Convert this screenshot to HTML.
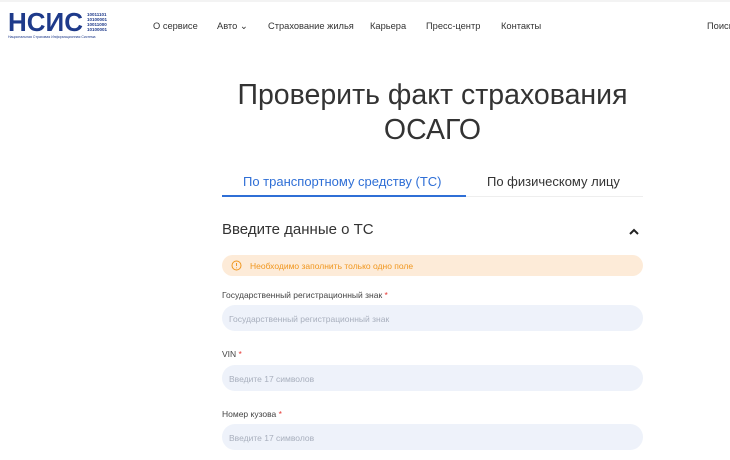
<!DOCTYPE html>
<html><head><meta charset="utf-8"><style>
*{margin:0;padding:0;box-sizing:border-box}
body{width:730px;height:460px;overflow:hidden;background:#fff;font-family:"Liberation Sans",sans-serif;position:relative;color:#333}
.a{position:absolute;white-space:nowrap}
.nav{font-size:9.3px;color:#333;top:21px}
.lab{font-size:8.5px;color:#444;left:222px}
.lab span{color:#e53935}
.inp{position:absolute;left:222px;width:421px;height:26px;background:#eef2fa;border-radius:13px;font-size:8.5px;color:#a8afbd;padding:9px 0 0 7px}
</style></head><body>
<div style="position:absolute;left:0;top:0;width:730px;height:2px;background:#f3f3f3"></div>
<div class="a" style="left:8px;top:8px;font-size:26px;font-weight:bold;color:#1e3a8a;letter-spacing:0px;line-height:28px">НСИС</div>
<div class="a" style="left:87px;top:12px;font-size:4.5px;line-height:5px;color:#1e3a8a;font-weight:bold">10011101<br>10100001<br>10011000<br>10100001</div>
<div class="a" style="left:8px;top:35px;font-size:3.5px;color:#1e3a8a">Национальная Страховая Информационная Система</div>
<div class="a nav" style="left:153px">О сервисе</div>
<div class="a nav" style="left:217px">Авто ⌄</div>
<div class="a nav" style="left:268px">Страхование жилья</div>
<div class="a nav" style="left:370px">Карьера</div>
<div class="a nav" style="left:426px">Пресс-центр</div>
<div class="a nav" style="left:501px">Контакты</div>
<div class="a nav" style="left:707px">Поиск</div>
<div class="a" style="left:200px;width:465px;top:78px;text-align:center;font-size:28.5px;line-height:35px;color:#333">Проверить факт страхования<br>ОСАГО</div>
<div class="a" style="left:243px;top:174px;font-size:13px;color:#2f6fd6">По транспортному средству (ТС)</div>
<div class="a" style="left:487px;top:174px;font-size:13px;color:#333">По физическому лицу</div>
<div style="position:absolute;left:222px;top:196px;width:421px;height:1px;background:#eee"></div>
<div style="position:absolute;left:222px;top:195px;width:244px;height:2px;background:#2f6fd6"></div>
<div class="a" style="left:222px;top:221px;font-size:15px;color:#333">Введите данные о ТС</div>
<svg class="a" style="left:629px;top:228px" width="10" height="8"><path d="M1 6L5 2L9 6" stroke="#222" stroke-width="2" fill="none"/></svg>
<div style="position:absolute;left:222px;top:255px;width:421px;height:21px;background:#fdebd8;border-radius:11px"></div>
<svg class="a" style="left:231px;top:260px" width="11" height="11"><circle cx="5.5" cy="5.5" r="4.5" stroke="#f0961e" fill="none"/><path d="M5.5 3v3M5.5 7.5v.8" stroke="#f0961e"/></svg>
<div class="a" style="left:250px;top:261px;font-size:8.5px;color:#f0961e">Необходимо заполнить только одно поле</div>
<div class="a lab" style="top:290px">Государственный регистрационный знак <span>*</span></div>
<div class="inp" style="top:305px">Государственный регистрационный знак</div>
<div class="a lab" style="top:349px">VIN <span>*</span></div>
<div class="inp" style="top:365px">Введите 17 символов</div>
<div class="a lab" style="top:409px">Номер кузова <span>*</span></div>
<div class="inp" style="top:424px">Введите 17 символов</div>
</body></html>
